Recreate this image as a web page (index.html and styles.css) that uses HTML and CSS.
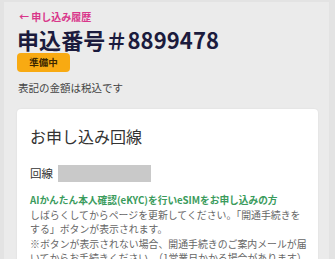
FILE: index.html
```html
<!DOCTYPE html>
<html lang="ja">
<head>
<meta charset="utf-8">
<link rel="stylesheet" href="styles.css">
</head>
<body>
<div class="frame">
  <a class="back">← 申し込み履歴</a>
  <h1 class="title">申込番号＃8899478</h1>
  <span class="badge">準備中</span>
  <p class="note">表記の金額は税込です</p>
  <section class="card">
    <h2 class="card-title">お申し込み回線</h2>
    <div class="line-row">
      <span class="line-label">回線</span>
      <span class="line-mask"></span>
    </div>
    <p class="ekyc">AIかんたん本人確認(eKYC)を行いeSIMをお申し込みの方</p>
    <p class="desc">しばらくしてからページを更新してください。「開通手続きを<br>する」ボタンが表示されます。<br>※ボタンが表示されない場合、開通手続きのご案内メールが届<br>いてからお手続きください。（1営業日かかる場合があります）</p>
  </section>
</div>
</body>
</html>
```

FILE: styles.css
```css
html, body {
  margin: 0;
  padding: 0;
}
body {
  background: #e3e3e3;
  font-family: "Noto Sans CJK JP", "Noto Sans", sans-serif;
  overflow: hidden;
}
.frame {
  margin: 2px 6px 0 4px;
  background: #ebebeb;
  padding: 8px 11px 0 13px;
  height: 257px;
  box-sizing: border-box;
  display: flex;
  flex-direction: column;
  align-items: flex-start;
}
.back {
  font-size: 10px;
  line-height: 14px;
  font-weight: 700;
  color: #d9368a;
  margin-left: 2px;
}
.title {
  margin: 3px 0 0 0;
  font-size: 22px;
  line-height: 24px;
  font-weight: 700;
  color: #1b1b3d;
  letter-spacing: 0.1px;
}
.badge {
  display: inline-block;
  margin-top: 2px;
  width: 53px;
  height: 19px;
  line-height: 19px;
  text-align: center;
  background: #f8aa12;
  border-radius: 4px;
  font-size: 9.5px;
  font-weight: 700;
  color: #3a2600;
}
.note {
  margin: 8px 0 0 1px;
  font-size: 10.5px;
  line-height: 16px;
  color: #444;
}
.card {
  align-self: stretch;
  margin-top: 13px;
  background: #fff;
  border-radius: 4px 4px 0 0;
  box-shadow: 0 0 2px rgba(0,0,0,0.08);
  padding: 16px 10px 0 13px;
  flex: 1;
}
.card-title {
  margin: 0;
  font-size: 16px;
  line-height: 22px;
  font-weight: 400;
  color: #333;
}
.line-row {
  display: flex;
  align-items: center;
  gap: 5px;
  margin-top: 18px;
}
.line-label {
  font-size: 11.5px;
  line-height: 17px;
  color: #333;
}
.line-mask {
  width: 93px;
  height: 17px;
  background: #c9c9c9;
}
.ekyc {
  margin: 11px 0 0 0;
  font-size: 9.7px;
  line-height: 14.5px;
  font-weight: 700;
  color: #3a9b5c;
  white-space: nowrap;
}
.desc {
  margin: 0;
  font-size: 9.9px;
  line-height: 14.5px;
  color: #666;
  white-space: nowrap;
}
```
